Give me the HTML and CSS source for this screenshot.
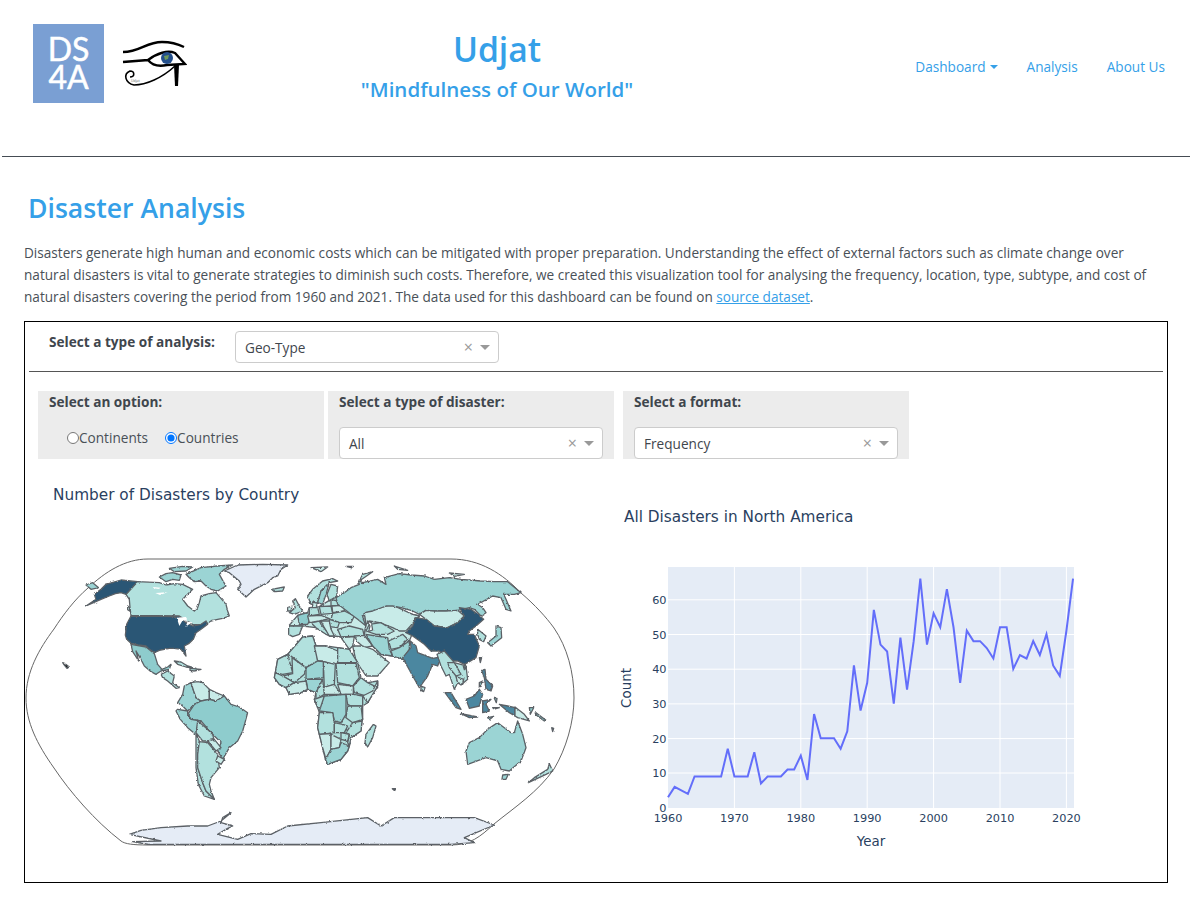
FILE: index.html
```html
<!DOCTYPE html>
<html>
<head>
	<title>Udjat - Disaster Analysis</title>
	<meta charset="utf-8">
	<link rel="stylesheet" href="styles.css">
</head>
<body>
	<header class="topbar">
		<div class="logos">
			<div class="ds4a">DS<br>4A</div>
			<svg class="eye" viewBox="0 0 65 46" width="65" height="46">
				<path class="eye-line thick" d="M1 12C18 12 24 2 40 2C48 2 56 4 62 7"/>
				<path class="eye-line thick" d="M1 22L26 20C35 13 46 10 53 13L63 24L45 25C36 27 30 25 26 20"/>
				<circle cx="45" cy="18" r="6" fill="#234f8c"/>
				<path d="M42 16L47 15L46 19L43 20Z" fill="#6d9a5a"/>
				<path class="eye-line" d="M53 26C40 38 24 45 12 45C3 43 1 34 8 31C13 31 13 37 8 37"/>
				<path d="M52 25H57L56 46H53Z" fill="#000"/>
				<text class="eye-word" x="9" y="42">Udjat</text>
			</svg>
		</div>
		<div class="brand">
			<h1>Udjat</h1>
			<h2>"Mindfulness of Our World"</h2>
		</div>
		<nav class="nav">
			<a href="#">Dashboard<span class="caret"></span></a>
			<a href="#">Analysis</a>
			<a href="#">About Us</a>
		</nav>
	</header>
	<hr class="top-rule">

	<main>
		<h2 class="page-title">Disaster Analysis</h2>
		<p class="intro">Disasters generate high human and economic costs which can be mitigated with proper preparation. Understanding the effect of external factors such as climate change over<br>natural disasters is vital to generate strategies to diminish such costs. Therefore, we created this visualization tool for analysing the frequency, location, type, subtype, and cost of<br>natural disasters covering the period from 1960 and 2021. The data used for this dashboard can be found on <a href="#">source dataset</a>.</p>

		<section class="box">
			<div class="analysis-row">
				<label class="field-label">Select a type of analysis:</label>
				<div class="select analysis-select"><span>Geo-Type</span><i class="clear">×</i><i class="arrow"></i></div>
			</div>
			<hr class="box-rule">

			<div class="filters">
				<div class="panel">
					<label class="field-label">Select an option:</label>
					<div class="radios">
						<label><input type="radio" name="scope">Continents</label>
						<label><input type="radio" name="scope" checked>Countries</label>
					</div>
				</div>
				<div class="panel">
					<label class="field-label">Select a type of disaster:</label>
					<div class="select"><span>All</span><i class="clear">×</i><i class="arrow"></i></div>
				</div>
				<div class="panel panel-last">
					<label class="field-label">Select a format:</label>
					<div class="select"><span>Frequency</span><i class="clear">×</i><i class="arrow"></i></div>
				</div>
			</div>

			<div class="charts">
				<div class="map-chart">
					<h3 class="chart-title">Number of Disasters by Country</h3>
					<svg class="map" viewBox="0 0 552 292" width="552" height="292">
						<defs>
							<filter id="rough" x="0" y="0" width="100%" height="100%" filterUnits="userSpaceOnUse" primitiveUnits="userSpaceOnUse">
								<feTurbulence type="fractalNoise" baseFrequency=".35" numOctaves="2" seed="4" result="noise"/>
								<feDisplacementMap in="SourceGraphic" in2="noise" scale="2.4" xChannelSelector="R" yChannelSelector="G"/>
							</filter>
						</defs>
						<path class="frame" d="M123 2H426C455 2 478 17 496 36C510 48 521 60 529 71C542 90 549 115 549 141C549 165 541 192 529 212C513 235 490 250 469 267C455 280 445 288 426 288H123C108 288 100 287 96 284C70 264 45 235 29 211C12 187 1 165 1 141C1 115 14 92 29 72C38 58 50 42 63 31C80 15 100 2 123 2Z"/>

						<g class="land">
						<!-- north america -->
						<g transform="translate(61 4) scale(.33333)">
							<polygon class="lv3" points="0,72 20,65 38,80 15,85"/>
							<polygon class="lv2" points="155,62 220,65 240,72 265,68 290,70 320,85 305,100 290,115 305,135 325,150 335,140 340,125 345,105 370,98 390,95 405,112 420,130 425,150 430,165 410,172 395,175 375,180 360,190 340,192 320,190 300,178 280,165 135,163 132,140 130,115 120,100"/>
							<polygon class="lv3" points="220,48 240,38 260,35 285,42 280,58 260,55 240,62"/>
							<polygon class="lv3" points="300,40 345,20 395,15 440,12 415,25 400,40 410,58 420,75 395,90 375,85 360,75 345,60 325,62 310,50"/>
							<polygon class="lv3" points="250,22 290,16 320,18 300,30 265,32"/>
							<polygon class="lv6" points="60,70 105,57 155,62 120,100 105,95 88,98 70,105 45,115 0,135 30,115 25,100 45,85"/>
							<polygon class="lv6" points="135,165 280,167 300,185 320,195 345,190 360,180 365,190 345,205 330,215 322,235 308,248 295,255 300,285 285,265 265,262 250,262 220,268 205,275 190,265 180,255 158,252 135,247 122,235 118,222 122,190"/>
							<polygon class="lake" points="200,78 225,80 218,84 204,82"/>
							<polygon class="lake" points="208,96 245,94 222,102"/>
							<polygon class="lake" points="272,170 298,168 305,180 290,178 280,195 276,182"/>
							<polygon class="lake" points="305,182 318,184 298,198"/>
							<polygon class="lv1" points="125,135 131,140 131,150 125,146"/>
							<polygon class="lv4" points="135,250 180,258 205,278 215,310 228,325 245,318 255,310 250,325 225,330 210,340 195,332 175,315 162,290 150,270 158,300 140,272"/>
							<polygon class="lv2" points="265,300 285,303 305,315 330,322 300,318 275,310"/>
							<polygon class="lv2" points="312,322 345,325 325,330 312,328"/>
						</g>

						<!-- greenland, south america, antarctica -->
						<g transform="translate(-4 -6) scale(.33333)">
							<polygon class="black" points="125,335 132,338 145,348 138,352 130,342"/>
							<polygon class="lv2" points="420,370 440,360 460,375 455,395 475,410 465,412 440,390 425,380"/>
							<polygon class="lv3" points="490,405 510,395 518,420 525,440 540,450 520,460 500,480 485,465 470,455 485,430"/>
							<polygon class="lv1" points="510,395 530,392 545,395 565,415 565,445 540,450 525,440 518,420"/>
							<polygon class="lv1" points="565,415 585,425 610,435 585,450 565,445"/>
							<polygon class="lv4" points="500,490 520,460 540,450 565,445 585,450 610,435 630,460 655,468 680,485 672,515 665,540 650,570 625,590 605,625 590,600 600,575 575,550 540,510 510,505"/>
							<polygon class="lv3" points="470,475 500,480 500,490 510,505 540,510 525,540 530,555 500,530 478,505 465,480"/>
							<polygon class="lv2" points="530,510 552,528 575,550 580,570 545,570 525,545"/>
							<polygon class="lv2" points="525,550 535,570 530,610 530,650 545,695 555,720 580,745 550,735 532,700 525,650"/>
							<polygon class="lv2" points="535,572 560,575 590,610 595,650 570,680 565,700 570,720 580,745 555,720 545,695 530,650 530,610"/>
							<polygon class="lv1" points="560,570 580,565 600,590 585,600"/>
							<polygon class="lv1" points="590,615 610,625 600,640 585,630"/>
							<polygon class="snow" points="610,60 650,42 725,40 800,42 780,55 770,75 755,80 740,95 700,115 675,138 650,115 660,100 655,90 625,65"/>
							<polygon class="lv2" points="752,115 790,108 785,120 760,122"/>
							<polygon class="snow" points="325,850 360,838 420,830 500,825 560,825 600,810 630,785 605,800 600,815 635,825 620,832 590,850 650,865 690,848 750,850 800,825 900,815 1040,800 1080,825 1120,800 1240,800 1360,800 1420,822 1330,860 1360,875 1290,880 380,880 335,872 420,870"/>
						</g>

						<!-- europe and west asia -->
						<g transform="translate(241 9) scale(.33333)">
							<polygon class="lv1" points="68,180 95,148 125,140 130,125 160,122 195,100 220,90 260,120 295,140 300,175 295,210 225,213 205,210 190,210 150,185 110,180"/>
							<polygon class="lv1" points="300,175 345,125 440,145 460,150 430,225 430,250 410,280 380,270 345,265 320,240 295,208"/>
							<polygon class="lv2" points="125,90 140,70 170,45 200,38 215,45 190,50 165,75 155,110 135,115"/>
							<polygon class="lv3" points="155,110 165,75 190,50 180,85 170,115"/>
							<polygon class="lv2" points="195,55 215,60 212,90 190,105 183,85"/>
							<polygon class="lv2" points="80,105 88,98 100,120 110,135 85,145 70,140 88,125"/>
							<polygon class="lv1" points="65,125 78,120 75,135 65,135"/>
							<polygon class="lv4" points="95,148 125,140 135,155 125,175 100,175"/>
							<polygon class="lv2" points="68,180 110,180 100,205 80,212 68,205"/>
							<polygon class="lv2" points="130,125 155,125 160,145 130,150"/>
							<polygon class="lv2" points="160,122 195,120 200,142 165,145"/>
							<polygon class="lv2" points="195,100 215,105 220,118 195,120"/>
							<polygon class="lv1" points="198,120 235,118 235,135 200,140"/>
							<polygon class="lv2" points="200,142 235,135 265,150 255,170 220,170 195,160"/>
							<polygon class="lv2" points="190,160 220,170 215,185 190,182"/>
							<polygon class="lv2" points="135,170 160,165 165,175 195,210 180,205 150,185"/>
							<polygon class="lv1" points="165,165 190,165 195,190 205,210 190,210 175,185"/>
							<polygon class="lv1" points="125,150 165,148 190,158 160,165 130,170"/>
							<polygon class="lv1" points="140,108 155,112 150,122 140,122"/>
							<polygon class="lv2" points="215,190 250,180 290,190 295,210 225,213"/>
							<polygon class="lv1" points="295,140 345,125 375,115 440,145 460,150 420,195 400,195 380,185 340,170 310,165 300,175"/>
							<polygon class="lv2" points="310,175 345,170 385,195 365,205 330,205 300,195"/>
							<polygon class="lake-edged" points="304,165 316,170 320,192 308,196 312,180"/>
							<polygon class="lv3" points="300,205 330,210 365,215 370,250 380,270 345,265 320,240"/>
							<polygon class="lv2" points="368,225 410,205 425,220 400,245 375,250"/>
							<polygon class="lv3" points="375,255 400,245 430,225 430,250 410,280 380,270"/>
							<polygon class="lv1" points="265,210 295,208 320,240 295,245 275,228"/>
							<polygon class="lv1" points="225,215 265,212 260,240 250,250"/>
							<polygon class="lv1" points="260,240 290,240 320,250 345,270 370,290 335,330 300,330 270,285"/>
						</g>

						<!-- russia, asia, oceania -->
						<g transform="translate(276 -6) scale(.33333)">
							<polygon class="lv3" points="105,140 130,125 150,110 175,100 172,88 185,95 230,85 255,100 250,80 295,68 330,72 370,75 400,85 445,80 480,85 540,90 580,92 620,92 660,125 640,130 608,130 615,145 630,180 615,175 600,140 575,135 530,160 545,170 555,185 540,195 520,175 505,170 470,178 435,180 400,180 375,178 355,190 335,180 300,170 275,165 255,165 215,180 190,185 185,200 195,225 170,205 150,190 125,170 110,160"/>
							<polygon class="lv2" points="175,90 215,62 185,70"/>
							<polygon class="lv1" points="30,50 80,48 60,62"/>
							<polygon class="lv1" points="135,46 157,46 150,50"/>
							<polygon class="lv1" points="280,45 320,58 290,55"/>
							<polygon class="lv1" points="445,66 490,70 460,76"/>
							<polygon class="lv1" points="355,190 375,178 400,180 435,180 470,178 490,195 470,215 440,230 400,225 375,205"/>
							<polygon class="lv6" points="315,245 335,225 345,200 375,205 400,225 440,230 470,215 490,195 475,170 510,175 530,190 548,205 525,225 505,240 500,250 520,250 535,285 525,320 500,335 490,340 470,330 440,330 425,310 415,300 390,300 370,280 335,255"/>
							<polygon class="lv5" points="305,320 330,290 328,270 345,285 350,305 395,322 420,318 410,345 395,340 380,375 355,410 335,375"/>
							<polygon class="lv2" points="360,405 372,410 368,422 360,418"/>
							<polygon class="lv3" points="505,575 535,560 560,535 590,515 610,530 630,545 640,545 650,510 665,550 675,590 660,630 625,660 600,655 590,630 555,620 500,640 495,600"/>
							<polygon class="lv3" points="605,672 622,670 615,685 603,685"/>
							<polygon class="lv2" points="682,695 735,670 755,660 745,638 740,655 700,680"/>
							<polygon class="black" points="274,713 284,713 281,719"/>
						</g>

						<!-- southeast asia -->
						<g transform="translate(386 54) scale(.33333)">
							<polygon class="lv2" points="78,130 100,120 130,155 165,165 170,205 150,222 140,215 130,235 120,205 115,190 105,195 90,165"/>
							<polygon class="lv2" points="110,155 130,155 150,190 135,195 115,170"/>
							<polygon class="lv1" points="135,197 158,205 155,220 140,215"/>
							<polygon class="lv5" points="102,245 120,245 150,295 135,290"/>
							<polygon class="lv5" points="150,308 200,318 175,320"/>
							<polygon class="lv5" points="165,265 190,255 205,235 215,250 205,285 175,292"/>
							<polygon class="lv5" points="215,270 240,265 225,280 235,300 215,305"/>
							<polygon class="lv5" points="212,178 222,175 225,205 245,225 240,240 225,235 220,200"/>
							<polygon class="lv5" points="265,280 290,285 312,290 312,315 295,305"/>
							<polygon class="lv1" points="312,288 340,310 355,330 320,320 312,315"/>
							<polygon class="lv3" points="255,45 270,50 272,80 240,105 230,95 255,75"/>
							<polygon class="lv2" points="200,55 225,75 218,92 205,85 200,70"/>
							<polygon class="lv3" points="205,140 212,140 208,155"/>
							<polygon class="lv5" points="157,166 166,170 160,176"/>
							<polygon class="lv4" points="250,262 258,262 256,275"/>
							<polygon class="lv4" points="245,290 265,290 250,294"/>
							<polygon class="lv4" points="205,215 215,210 205,230"/>
							<polygon class="lv4" points="230,320 248,316 235,326"/>
							<polygon class="lv4" points="355,290 368,290 358,310"/>
							<polygon class="lv4" points="375,305 405,328 400,330 372,310"/>
							<polygon class="lv4" points="422,350 428,352 425,362"/>
						</g>

						<!-- africa and madagascar -->
						<g transform="translate(241 74) scale(.33333)">
							<polygon class="lv2" points="110,18 140,15 150,45 180,45 215,50 250,55 275,95 285,140 305,155 335,150 335,165 305,215 290,225 290,265 288,270 285,300 255,320 250,345 245,360 225,385 185,400 178,385 170,350 160,310 155,290 160,245 155,230 145,205 150,185 125,175 105,185 70,190 60,170 40,160 25,140 28,125 35,85 65,70"/>
							<polygon class="lv2" points="65,70 110,18 140,15 150,45 155,90 120,110 75,75"/>
							<polygon class="lv2" points="35,85 65,70 80,125 50,130 28,125"/>
							<polygon class="lv2" points="78,80 120,110 115,130 85,155 50,135 80,128"/>
							<polygon class="lv1" points="145,45 180,45 215,60 215,105 170,90 155,90"/>
							<polygon class="lv2" points="215,50 250,55 275,95 215,95"/>
							<polygon class="lv2" points="210,97 270,97 280,140 260,165 215,155"/>
							<polygon class="lv2" points="172,92 208,100 205,160 175,170"/>
							<polygon class="lv3" points="120,110 155,90 172,92 172,140 120,145"/>
							<polygon class="lv3" points="120,145 170,145 150,185 125,175"/>
							<polygon class="lv2" points="262,165 285,140 305,155 335,170 300,195 265,185"/>
							<polygon class="lv1" points="335,150 335,165 305,215 290,195 320,180"/>
							<polygon class="lv1" points="215,160 262,165 262,190 225,190"/>
							<polygon class="lv1" points="170,170 205,160 225,190 175,190"/>
							<polygon class="lv2" points="150,185 170,145 175,190 150,205"/>
							<polygon class="lv2" points="145,205 175,195 170,230 155,230"/>
							<polygon class="lv3" points="175,195 240,190 240,250 225,275 205,270 200,245 160,240"/>
							<polygon class="lv2" points="240,190 262,190 290,195 290,225 255,225 245,220"/>
							<polygon class="lv2" points="245,225 285,225 290,265 260,275 240,260"/>
							<polygon class="lv2" points="160,245 200,245 205,275 205,305 160,310 155,290"/>
							<polygon class="lv2" points="205,275 230,280 245,285 235,305 205,305"/>
							<polygon class="lv2" points="260,275 288,270 285,300 255,320 250,345 245,335 250,310 240,305"/>
							<polygon class="lv1" points="160,310 195,308 195,355 180,385 170,350"/>
							<polygon class="lv1" points="195,310 225,325 220,350 195,355"/>
							<polygon class="lv2" points="225,305 250,310 245,330 225,325"/>
							<polygon class="lv3" points="195,355 220,350 225,335 250,345 245,360 225,385 185,400 178,385"/>
							<polygon class="lv2" points="28,125 50,135 85,155 60,170 40,160 25,140"/>
							<polygon class="lv1" points="60,170 85,155 120,150 125,175 105,185 70,190"/>
							<polygon class="lv2" points="322,280 330,285 320,320 305,348 297,335 300,310"/>
						</g>
						</g>
					</svg>
				</div>
				<div class="line-chart">
					<h3 class="chart-title">All Disasters in North America</h3>
					<svg class="plot" viewBox="610 550 480 310" width="480" height="310">
						<rect class="plot-bg" x="668" y="567" width="406" height="241"/>
						<g class="grid">
							<path d="M734.4 567V808M800.8 567V808M867.2 567V808M933.6 567V808M1000 567V808M1066.4 567V808"/>
							<path d="M668 773H1074M668 738.6H1074M668 703.9H1074M668 669.2H1074M668 634.5H1074M668 599.8H1074"/>
						</g>
						<g transform="translate(668 807.7) scale(6.64 -3.47)">
							<polyline class="trace" points="0,3 1,6 2,5 3,4 4,9 5,9 6,9 7,9 8,9 9,17 10,9 11,9 12,9 13,16 14,7 15,9 16,9 17,9 18,11 19,11 20,15 21,8 22,27 23,20 24,20 25,20 26,17 27,22 28,41 29,28 30,36 31,57 32,47 33,45 34,30 35,49 36,34 37,48 38,66 39,47 40,56 41,52 42,63 43,52 44,36 45,51 46,48 47,48 48,46 49,43 50,52 51,52 52,40 53,44 54,43 55,48 56,44 57,50 58,41 59,38 60,51 61,66"/>
						</g>
						<g class="ticks ticks-y">
							<text x="666.5" y="812">0</text>
							<text x="666.5" y="777">10</text>
							<text x="666.5" y="743">20</text>
							<text x="666.5" y="708">30</text>
							<text x="666.5" y="673">40</text>
							<text x="666.5" y="639">50</text>
							<text x="666.5" y="604">60</text>
						</g>
						<g class="ticks ticks-x">
							<text x="668" y="822">1960</text>
							<text x="734.4" y="822">1970</text>
							<text x="800.8" y="822">1980</text>
							<text x="867.2" y="822">1990</text>
							<text x="933.6" y="822">2000</text>
							<text x="1000" y="822">2010</text>
							<text x="1066.4" y="822">2020</text>
						</g>
						<text class="axis-name" x="871" y="846">Year</text>
						<text class="axis-name" transform="translate(631 688) rotate(-90)">Count</text>
					</svg>
				</div>
			</div>
		</section>
	</main>
</body>
</html>
```

FILE: styles.css
```css
body {
	margin: 0;
	font-family: "Open Sans", "Noto Sans", sans-serif;
	font-size: 13.62px;
	color: #495057;
	background-color: #fff;
}
a {
	color: #35a0e8;
	text-decoration: none;
}
h1, h2, h3, p {
	margin: 0;
}

/* header */
.topbar {
	display: flex;
	height: 156px;
	box-sizing: border-box;
	padding: 24px 31px 0 33px;
}
.logos {
	display: flex;
	align-items: flex-start;
	width: 260px;
}
.ds4a {
	width: 71px;
	height: 79px;
	box-sizing: border-box;
	padding-top: 11px;
	margin-right: 18px;
	background-color: #7a9fd3;
	color: #fff;
	font-family: "Lato", sans-serif;
	font-size: 32px;
	line-height: 28px;
	text-align: center;
	-webkit-text-stroke: .5px #fff;
}
.eye {
	margin-top: 16px;
}
.eye-line {
	fill: none;
	stroke: #000;
	stroke-width: 1.6;
}
.eye-line.thick {
	stroke-width: 2.4;
}
.eye-word {
	font-size: 3.5px;
	fill: #666;
}
.brand {
	width: 410px;
	margin-left: -1px;
	text-align: center;
	color: #35a0e8;
}
.brand h1 {
	padding-top: 3px;
	font-size: 33.7px;
	line-height: 45px;
	font-weight: 600;
}
.brand h2 {
	padding-top: 1px;
	font-size: 20.5px;
	line-height: 32px;
	font-weight: 600;
}
.nav {
	display: flex;
	flex: 1;
	justify-content: flex-end;
	gap: 29px;
	padding-top: 34px;
	line-height: 18px;
}
.caret {
	display: inline-block;
	margin-left: 4px;
	vertical-align: 3px;
	border-top: 4px solid #35a0e8;
	border-left: 4px solid transparent;
	border-right: 4px solid transparent;
}
.top-rule {
	height: 1px;
	margin: 0 6px 0 2px;
	border: 0;
	background-color: #454c54;
}

/* intro */
.page-title {
	padding: 34px 0 0 28px;
	font-size: 26.6px;
	line-height: 35px;
	font-weight: 600;
	color: #35a0e8;
}
.intro {
	margin: 16px 24px 0;
	line-height: 21.8px;
	white-space: nowrap;
}
.intro a {
	text-decoration: underline;
}

/* main box */
.box {
	box-sizing: border-box;
	width: 1144px;
	height: 562px;
	margin: 14px 0 0 24px;
	border: 1px solid #000;
}
.analysis-row {
	display: flex;
	height: 49px;
	padding: 9px 0 0 24px;
	box-sizing: border-box;
}
.field-label {
	font-weight: 700;
	line-height: 22px;
	color: #3f464d;
}
.analysis-row .field-label {
	width: 186px;
}
.select {
	display: flex;
	align-items: center;
	height: 32px;
	box-sizing: border-box;
	padding: 0 8px 0 9px;
	border: 1px solid #ccc;
	border-radius: 4px;
	background-color: #fff;
	color: #3f464d;
}
.select span {
	flex: 1;
}
.analysis-select {
	width: 264px;
}
.clear {
	font-style: normal;
	font-size: 16px;
	color: #999;
}
.arrow {
	margin-left: 7px;
	border-top: 5px solid #999;
	border-left: 5px solid transparent;
	border-right: 5px solid transparent;
}
.box-rule {
	height: 1px;
	margin: 0 4px;
	border: 0;
	background-color: #555;
}
.filters {
	display: flex;
	gap: 4px;
	margin: 19px 0 0 13px;
}
.panel {
	display: flex;
	flex-direction: column;
	justify-content: space-between;
	width: 286px;
	height: 68px;
	box-sizing: border-box;
	padding: 0 11px;
	background-color: #ececec;
}
.panel-last {
	margin-left: 5px;
}
.radios {
	display: flex;
	gap: 17px;
	height: 31px;
	padding-left: 18px;
}
.radios input {
	margin: 0;
	width: 12px;
	height: 12px;
	vertical-align: -1px;
}

/* charts */
.charts {
	display: flex;
}
.chart-title {
	font-family: "DejaVu Sans", sans-serif;
	font-size: 15.3px;
	line-height: 20px;
	font-weight: 400;
	color: #2a3f5f;
}
.map-chart {
	width: 585px;
	padding-top: 26px;
}
.map-chart .chart-title {
	padding-left: 28px;
}
.map {
	display: block;
	margin-top: 52px;
}
.frame {
	fill: #fff;
	stroke: #666;
	stroke-width: 1;
}
.land {
	filter: url(#rough);
}
.map polygon {
	stroke: #5b6166;
	stroke-width: 1.3;
	stroke-linejoin: round;
	vector-effect: non-scaling-stroke;
}
.lv1 { fill: #c8ebe8; }
.lv2 { fill: #b2e1de; }
.lv3 { fill: #9bd4d4; }
.lv4 { fill: #8ecccd; }
.lv5 { fill: #4b87a0; }
.lv6 { fill: #2a5675; }
.map .snow { fill: #e5ecf6; }
.map .black { fill: #000; }
.map .lake {
	fill: #fff;
	stroke: none;
}
.map .lake-edged {
	fill: #fff;
}
.line-chart {
	padding-top: 48px;
}
.line-chart .chart-title {
	padding-left: 14px;
}
.plot {
	display: block;
	margin: 23px 0 0 0;
}
.plot-bg {
	fill: #e5ecf6;
}
.grid path {
	fill: none;
	stroke: #fff;
	stroke-width: 1;
}
.trace {
	fill: none;
	stroke: #636efa;
	stroke-width: 2;
	vector-effect: non-scaling-stroke;
}
.plot text {
	font-family: "DejaVu Sans", sans-serif;
	font-size: 11.3px;
	fill: #2a3f5f;
}
.ticks-y text {
	text-anchor: end;
}
.ticks-x text,
.plot .axis-name {
	text-anchor: middle;
}
.plot .axis-name {
	font-size: 13.4px;
}
```
